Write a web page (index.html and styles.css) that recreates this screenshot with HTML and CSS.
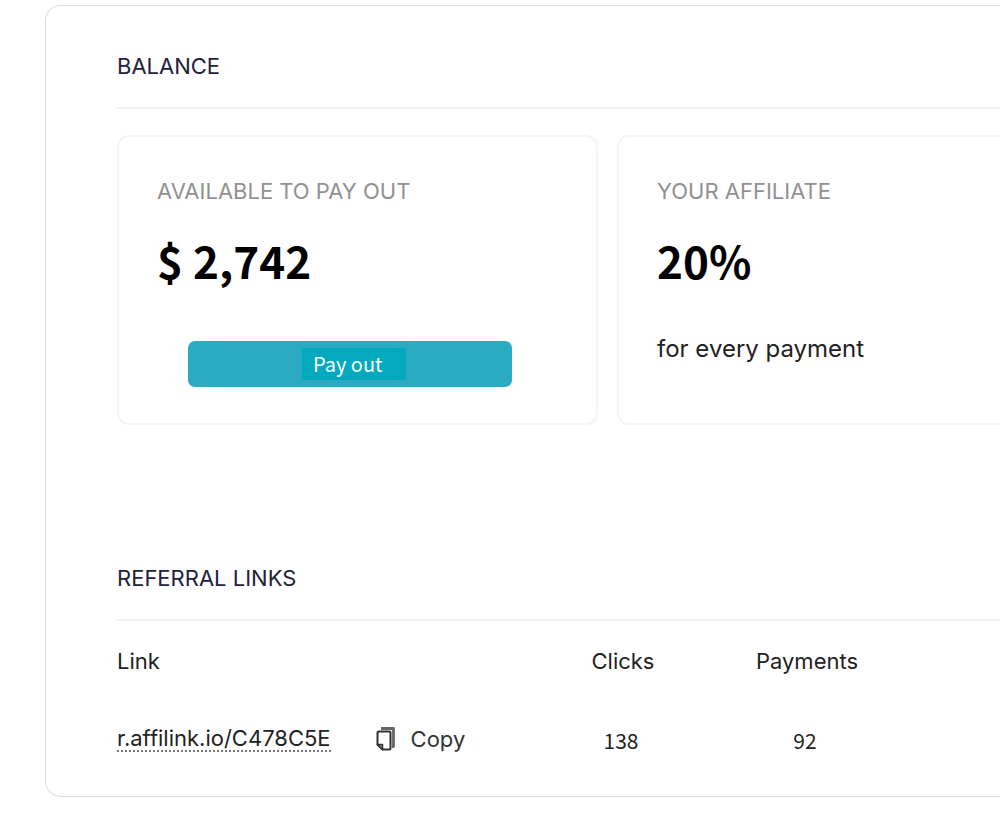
FILE: index.html
```html
<!DOCTYPE html>
<html lang="en">
<head>
<meta charset="utf-8">
<title>Affiliate balance</title>
<link rel="stylesheet" href="styles.css">
</head>
<body>
<main class="panel">
  <section class="balance">
    <h2 class="section-title">BALANCE</h2>
    <div class="cards">
      <article class="card">
        <h3 class="card-label">AVAILABLE TO PAY OUT</h3>
        <p class="amount">$ 2,742</p>
        <button class="payout" type="button"><span class="payout-text">Pay out</span></button>
      </article>
      <article class="card card-open">
        <h3 class="card-label">YOUR AFFILIATE</h3>
        <p class="amount">20%</p>
        <p class="note">for every payment</p>
      </article>
    </div>
  </section>
  <section class="referrals">
    <h2 class="section-title">REFERRAL LINKS</h2>
    <table class="links">
      <thead>
        <tr><th class="col-link" scope="col">Link</th><th class="col-clicks" scope="col">Clicks</th><th class="col-payments" scope="col">Payments</th><td></td></tr>
      </thead>
      <tbody>
        <tr>
          <td>
            <div class="link-cell">
              <a class="link" href="#">r.affilink.io/C478C5E</a>
              <button class="copy" type="button">
                <svg class="copy-icon" viewBox="0 0 20 26" width="20" height="26" aria-hidden="true"><path d="M5 2.5H17.5V20.5H16" fill="none" stroke="#666" stroke-width="2.8" stroke-linejoin="round"/><path d="M3 5.500H13Q14.500 5.500 14.500 7V22Q14.500 23.500 13 23.500H6.500L1.500 18.500V7Q1.500 5.500 3 5.500Z" fill="#fff" stroke="#333" stroke-width="2"/><path d="M1.500 18.500H6.500V23.500Z" fill="#999" stroke="#333" stroke-width="1.500" stroke-linejoin="round"/></svg>
                Copy
              </button>
            </div>
          </td>
          <td class="number">138</td>
          <td class="number">92</td>
          <td></td>
        </tr>
      </tbody>
    </table>
  </section>
</main>
</body>
</html>
```
FILE: styles.css
```css
* { box-sizing: border-box; }
body { margin: 0; background: #fff; color: #222; font-family: Inter, "Liberation Sans", sans-serif; font-size: 22px; line-height: 28px; }
h2, h3, p { margin: 0; font-weight: 400; }
.panel { margin: 5px 0 0 45px; padding: 46px 0 19px 71px; border: 1px solid #dcdcdc; border-right: 0; border-radius: 16px 0 0 16px; }
.section-title { padding-bottom: 27px; border-bottom: 2px solid #f2f2f2; font-size: 22px; color: #22223a; }
.cards { display: grid; grid-template-columns: 481px 1fr; gap: 19px; padding-top: 26px; }
.card { min-height: 290px; padding: 40px 38px 36px; border: 2px solid #f5f5f5; border-radius: 12px; }
.card-open { border-right: 0; border-radius: 12px 0 0 12px; }
.card-label { font-size: 22px; color: #919191; }
.amount { margin-top: 29px; font: 700 44px/52px "Noto Sans CJK SC", sans-serif; color: #000; }
.payout { display: flex; align-items: center; justify-content: center; width: 324px; height: 46px; margin: 55px 0 0 31px; padding: 0 0 0 8px; border: 0; border-radius: 7px; background: #2aabc1; color: #fff; font: 20px/32px "Noto Sans CJK SC", sans-serif; }
.payout-text { width: 104px; padding-left: 11px; background: #02a9bf; text-align: left; }
.note { margin-top: 47px; font-size: 24px; line-height: 32px; }
.referrals { margin-top: 139px; }
.links { width: 100%; border-collapse: collapse; table-layout: fixed; }
.links th, .links td { padding: 0; font-weight: 400; text-align: center; }
.links th { height: 80px; }
.links tbody td { height: 76px; }
.links .col-link { width: 424px; text-align: left; }
.col-clicks { width: 164px; }
.col-payments { width: 204px; }
.link-cell { display: flex; align-items: center; gap: 45px; }
.link { color: #222; text-decoration: none; line-height: 24px; border-bottom: 2px dotted #777; }
.copy { display: flex; align-items: center; gap: 15px; padding: 0; border: 0; background: none; color: #333; font: inherit; }
.links .number { padding: 2px 4px 0 0; font-family: "Noto Sans CJK SC", sans-serif; font-size: 21px; }
```
